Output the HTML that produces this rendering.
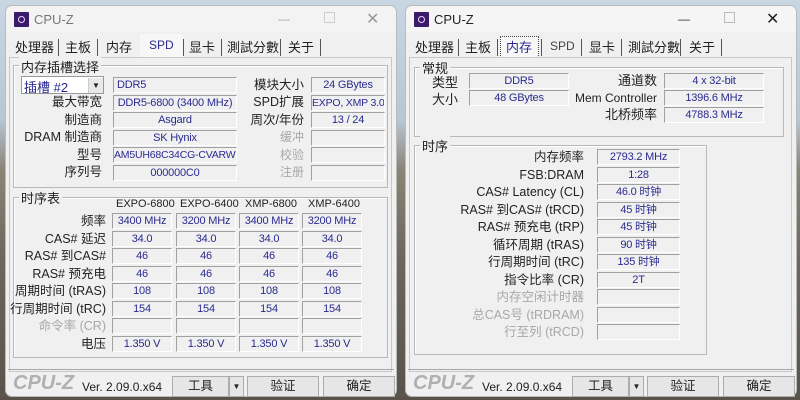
<!DOCTYPE html>
<html><head><meta charset="utf-8"><style>
*{margin:0;padding:0;box-sizing:border-box}
body{width:800px;height:400px;overflow:hidden;position:relative;font-family:"Liberation Sans","Noto Sans CJK SC",sans-serif;font-size:12px;color:#222;
background:linear-gradient(180deg,#c9d6e3 0px,#b8c6d4 120px,#8a8378 170px,#6e665c 260px,#5a534a 400px)}
.a{position:absolute;white-space:nowrap}
.win{position:absolute;background:#f0f0f0;border-radius:7px;overflow:hidden;border:1px solid #bbb}
.tb{position:absolute;left:0;top:0;right:0;height:26px;background:#f3f3f3}
.ic{position:absolute;left:8px;top:6px;width:15px;height:15px;background:#3b1a6b;border-radius:1px}
.ic:after{content:"";position:absolute;left:4px;top:4px;width:5px;height:5px;border:1px solid #e8d8ff;border-radius:50%}
.tt{position:absolute;left:28px;top:6px;font-size:13px}
.lbl{position:absolute;text-align:right;white-space:nowrap;line-height:16px}
.box{position:absolute;height:16px;border-top:1px solid #a0a0a0;border-left:1px solid #a0a0a0;border-bottom:1px solid #fff;border-right:1px solid #fff;background:#f0f0f0;color:#2a2a90;text-align:center;line-height:14px;font-size:11px;letter-spacing:-0.2px;white-space:nowrap;overflow:hidden}
.grp{position:absolute;border:1px solid #b8b8b8;box-shadow:inset 1px 1px 0 #fff}
.gt{position:absolute;background:#f0f0f0;padding:0 2px;font-size:13px}
.dis{color:#a8a8a8}
.btn{position:absolute;height:21px;background:#e6e6e6;border:1px solid #adadad;text-align:center;line-height:19px;font-size:12.5px}
.logo{position:absolute;font-size:20px;font-style:italic;font-weight:bold;color:#b0b0b0}
.sep{position:absolute;width:1px;height:17px;background:#555}
</style></head><body>

<!-- LEFT WINDOW -->
<div class="win" style="left:5px;top:5px;width:392px;height:392px">
 <div class="tb"><div class="ic"></div><div class="tt" style="color:#777">CPU-Z</div>
  <div class="a" style="left:272px;top:6px;color:#aaa">—</div>
  <div class="a" style="left:318px;top:6px;width:11px;height:11px;border:1px solid #ccc"></div>
  <div class="a" style="left:360px;top:3px;color:#999;font-size:16px">✕</div></div>
 <div class="a" style="left:9px;top:31px;font-size:13px">处理器</div><div class="sep" style="left:52px;top:33px"></div>
 <div class="a" style="left:59px;top:31px;font-size:13px">主板</div><div class="sep" style="left:91px;top:33px"></div>
 <div class="a" style="left:100px;top:31px;font-size:13px">内存</div>
 <div class="a" style="left:134px;top:28px;width:43px;height:25px;background:#f7f7f7"></div>
 <div class="a" style="left:143px;top:32px;color:#2a2a90">SPD</div><div class="sep" style="left:177px;top:33px"></div>
 <div class="a" style="left:183px;top:31px;font-size:13px">显卡</div><div class="sep" style="left:215px;top:33px"></div>
 <div class="a" style="left:221px;top:31px;font-size:13px">測試分數</div><div class="sep" style="left:274px;top:33px"></div>
 <div class="a" style="left:282px;top:31px;font-size:13px">关于</div><div class="sep" style="left:314px;top:33px"></div>
 <div class="a" style="left:3px;top:51px;width:383px;height:315px;border:1px solid #c8c8c8;background:#f0f0f0"></div>

 <div class="grp" style="left:7px;top:59px;width:375px;height:123px"></div>
 <div class="gt" style="left:13px;top:51px">内存插槽选择</div>
 <div class="a" style="left:15px;top:70px;width:83px;height:18px;background:#fff;border:1px solid #999"></div>
 <div class="a" style="left:18px;top:71px;color:#2a2a90;font-size:13px">插槽 #2</div>
 <div class="a" style="left:82px;top:72px;width:15px;height:15px;background:#e8e8e8;border-left:1px solid #ccc;font-size:8px;text-align:center;line-height:15px">▼</div>
 <div class="box" style="left:107px;top:71px;width:124px;text-align:left;padding-left:3px">DDR5</div>
 <div class="lbl" style="right:294px;top:88px;font-size:12.5px">最大带宽</div><div class="box" style="left:107px;top:89px;width:124px">DDR5-6800 (3400 MHz)</div>
 <div class="lbl" style="right:294px;top:106px;font-size:12.5px">制造商</div><div class="box" style="left:107px;top:106px;width:124px">Asgard</div>
 <div class="lbl" style="right:294px;top:123px;font-size:12.5px">DRAM 制造商</div><div class="box" style="left:107px;top:124px;width:124px">SK Hynix</div>
 <div class="lbl" style="right:294px;top:141px;font-size:12.5px">型号</div><div class="box" style="left:107px;top:141px;width:124px;text-align:left;font-size:10.5px">AM5UH68C34CG-CVARWM</div>
 <div class="lbl" style="right:294px;top:158px;font-size:12.5px">序列号</div><div class="box" style="left:107px;top:159px;width:124px">000000C0</div>
 <div class="lbl" style="right:92px;top:71px;font-size:12.5px">模块大小</div><div class="box" style="left:305px;top:71px;width:74px">24 GBytes</div>
 <div class="lbl" style="right:92px;top:88px;font-size:12.5px">SPD扩展</div><div class="box" style="left:305px;top:89px;width:74px;font-size:10.5px">EXPO, XMP 3.0</div>
 <div class="lbl" style="right:92px;top:106px;font-size:12.5px">周次/年份</div><div class="box" style="left:305px;top:106px;width:74px">13 / 24</div>
 <div class="lbl dis" style="right:92px;top:123px">缓冲</div><div class="box" style="left:305px;top:124px;width:74px"></div>
 <div class="lbl dis" style="right:92px;top:141px">校验</div><div class="box" style="left:305px;top:141px;width:74px"></div>
 <div class="lbl dis" style="right:92px;top:158px">注册</div><div class="box" style="left:305px;top:159px;width:74px"></div>

 <div class="grp" style="left:7px;top:191px;width:375px;height:161px"></div>
 <div class="gt" style="left:13px;top:182px">时序表</div>
 <div class="a" style="left:110px;top:192px;font-size:11px">EXPO-6800</div>
 <div class="a" style="left:174px;top:192px;font-size:11px">EXPO-6400</div>
 <div class="a" style="left:239px;top:192px;font-size:11px">XMP-6800</div>
 <div class="a" style="left:302px;top:192px;font-size:11px">XMP-6400</div>
</div>

<!-- RIGHT WINDOW -->
<div class="win" style="left:405px;top:5px;width:392px;height:392px">
 <div class="tb" style="background:#f5f5f5"><div class="ic"></div><div class="tt">CPU-Z</div>
  <div class="a" style="left:272px;top:6px;color:#333">—</div>
  <div class="a" style="left:318px;top:6px;width:11px;height:11px;border:1px solid #bbb"></div>
  <div class="a" style="left:360px;top:3px;color:#222;font-size:16px">✕</div></div>
 <div class="a" style="left:9px;top:31px;font-size:13px">处理器</div><div class="sep" style="left:52px;top:33px"></div>
 <div class="a" style="left:59px;top:31px;font-size:13px">主板</div><div class="sep" style="left:91px;top:33px"></div>
 <div class="a" style="left:94px;top:30px;width:39px;height:22px;background:#f7f7f7;border:1px dotted #444"></div>
 <div class="a" style="left:100px;top:31px;font-size:13px;color:#2a2a90">内存</div><div class="sep" style="left:135px;top:33px"></div>
 <div class="a" style="left:144px;top:33px;color:#444">SPD</div><div class="sep" style="left:175px;top:33px"></div>
 <div class="a" style="left:183px;top:31px;font-size:13px">显卡</div><div class="sep" style="left:215px;top:33px"></div>
 <div class="a" style="left:222px;top:31px;font-size:13px">測試分數</div><div class="sep" style="left:274px;top:33px"></div>
 <div class="a" style="left:283px;top:31px;font-size:13px">关于</div><div class="sep" style="left:315px;top:33px"></div>
 <div class="a" style="left:3px;top:51px;width:383px;height:315px;border:1px solid #c8c8c8;background:#f0f0f0"></div>

 <div class="grp" style="left:8px;top:61px;width:370px;height:70px"></div>
 <div class="gt" style="left:14px;top:52px">常规</div>
 <div class="a" style="left:26px;top:66px;font-size:13px">类型</div><div class="box" style="left:63px;top:67px;width:100px">DDR5</div>
 <div class="a" style="left:26px;top:83px;font-size:13px">大小</div><div class="box" style="left:63px;top:84px;width:100px">48 GBytes</div>
 <div class="lbl" style="right:139px;top:67px;font-size:13px">通道数</div><div class="box" style="left:258px;top:67px;width:100px">4 x 32-bit</div>
 <div class="lbl" style="right:139px;top:84px;font-size:12px">Mem Controller</div><div class="box" style="left:258px;top:84px;width:100px">1396.6 MHz</div>
 <div class="lbl" style="right:139px;top:101px;font-size:13px">北桥频率</div><div class="box" style="left:258px;top:101px;width:100px">4788.3 MHz</div>

 <div class="grp" style="left:8px;top:139px;width:293px;height:210px"></div>
 <div class="gt" style="left:14px;top:130px">时序</div>
</div>

<div id="rows"></div>
<script>
var L=[["频率",["3400 MHz","3200 MHz","3400 MHz","3200 MHz"],0],["CAS# 延迟",["34.0","34.0","34.0","34.0"],0],["RAS# 到CAS#",["46","46","46","46"],0],["RAS# 预充电",["46","46","46","46"],0],["周期时间 (tRAS)",["108","108","108","108"],0],["行周期时间 (tRC)",["154","154","154","154"],0],["命令率 (CR)",["","","",""],1],["电压",["1.350 V","1.350 V","1.350 V","1.350 V"],0]];
var h="";var cx=[112,176,239,302];
L.forEach(function(r,i){var y=Math.round(213+i*17.5);
h+='<div class="lbl'+(r[2]?' dis':'')+'" style="right:694px;top:'+y+'px;font-size:12.5px">'+r[0]+'</div>';
r[1].forEach(function(v,j){h+='<div class="box" style="left:'+cx[j]+'px;top:'+y+'px;width:60px">'+v+'</div>';});});
var R=[["内存频率","2793.2 MHz",0],["FSB:DRAM","1:28",0],["CAS# Latency (CL)","46.0 时钟",0],["RAS# 到CAS# (tRCD)","45 时钟",0],["RAS# 预充电 (tRP)","45 时钟",0],["循环周期 (tRAS)","90 时钟",0],["行周期时间 (tRC)","135 时钟",0],["指令比率 (CR)","2T",0],["内存空闲计时器","",1],["总CAS号 (tRDRAM)","",1],["行至列 (tRCD)","",1]];
R.forEach(function(r,i){var y=Math.round(149+i*17.5);
h+='<div class="lbl'+(r[2]?' dis':'')+'" style="right:216px;top:'+y+'px;font-size:12.5px">'+r[0]+'</div>';
h+='<div class="box" style="left:597px;top:'+y+'px;width:83px">'+r[1]+'</div>';});
[5,405].forEach(function(o){
h+='<div class="a" style="left:'+(o+3)+'px;top:369px;width:386px;height:1px;background:#a8a8a8"></div>';
h+='<div class="logo" style="left:'+(o+8)+'px;top:372px">CPU-Z</div>';
h+='<div class="a" style="left:'+(o+77)+'px;top:380px;font-size:12px">Ver. 2.09.0.x64</div>';
h+='<div class="btn" style="left:'+(o+167)+'px;top:376px;width:57px">工具</div>';
h+='<div class="btn" style="left:'+(o+224)+'px;top:376px;width:15px;font-size:8px">▼</div>';
h+='<div class="btn" style="left:'+(o+242)+'px;top:376px;width:72px">验证</div>';
h+='<div class="btn" style="left:'+(o+318)+'px;top:376px;width:72px">确定</div>';});
document.getElementById("rows").innerHTML=h;
</script>
</body></html>
